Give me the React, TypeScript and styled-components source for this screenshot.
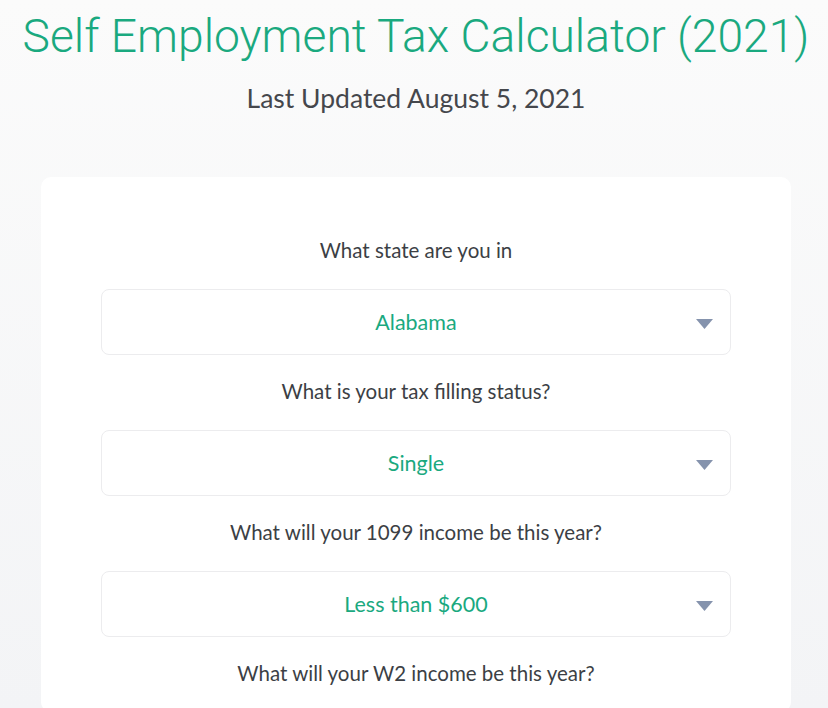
import styled, { createGlobalStyle } from 'styled-components';

const GlobalStyle = createGlobalStyle`
    html, body {
        margin: 0;
        padding: 0;
    }
    body {
        background: linear-gradient(180deg, #fbfbfb 0%, #f3f4f6 100%);
        min-height: 708px;
        font-family: 'Lato', 'Open Sans', sans-serif;
    }
`;

const questions = [
    { label: 'What state are you in', value: 'Alabama' },
    { label: 'What is your tax filling status?', value: 'Single' },
    { label: 'What will your 1099 income be this year?', value: 'Less than $600' },
    { label: 'What will your W2 income be this year?', value: '' },
];

function CaretDown() {
    return (
        <Caret width='17' height='10' viewBox='0 0 17 10' aria-hidden='true'>
            <path d='M0 0 H17 L8.5 10 Z' fill='#8593ad' />
        </Caret>
    );
}

function App() {
    return (
        <>
            <GlobalStyle />
            <Page>
                <Title>Self Employment Tax Calculator (2021)</Title>
                <Updated>Last Updated August 5, 2021</Updated>
                <Card>
                    {questions.map((q) => (
                        <Field key={q.label}>
                            <Label>{q.label}</Label>
                            {q.value && (
                                <Select role='button' aria-label={q.label}>
                                    <SelectValue>{q.value}</SelectValue>
                                    <CaretDown />
                                </Select>
                            )}
                        </Field>
                    ))}
                </Card>
            </Page>
        </>
    );
}

export default App;

const Page = styled.div`
    display: flex;
    flex-direction: column;
    align-items: center;
    padding: 6px 0 0 4px;
    height: 708px;
    overflow: hidden;
    box-sizing: border-box;
`;

const Title = styled.h1`
    margin: 0;
    color: #1aa97f;
    font-family: 'Roboto', 'Lato', sans-serif;
    font-weight: 300;
    font-size: 46.2px;
    line-height: 60px;
    white-space: nowrap;
`;

const Updated = styled.div`
    margin-top: 16px;
    color: #45474c;
    font-size: 26.5px;
    line-height: 32px;
`;

const Card = styled.div`
    margin-top: 63px;
    width: 750px;
    background: #fff;
    border-radius: 10px;
    padding: 58px 60px 0;
    box-sizing: border-box;
    display: flex;
    flex-direction: column;
    gap: 21px;
    flex: 1;
`;

const Field = styled.div`
    display: flex;
    flex-direction: column;
    align-items: center;
`;

const Label = styled.div`
    color: #3c3f45;
    font-size: 20.5px;
    line-height: 30px;
    margin-bottom: 24px;
`;

const Select = styled.div`
    position: relative;
    width: 100%;
    height: 66px;
    box-sizing: border-box;
    border: 1px solid #ececee;
    border-radius: 8px;
    display: flex;
    align-items: center;
    justify-content: center;
    cursor: pointer;
`;

const SelectValue = styled.span`
    color: #1aa97f;
    font-size: 21.5px;
`;

const Caret = styled.svg`
    position: absolute;
    right: 17px;
    top: 29px;
`;
